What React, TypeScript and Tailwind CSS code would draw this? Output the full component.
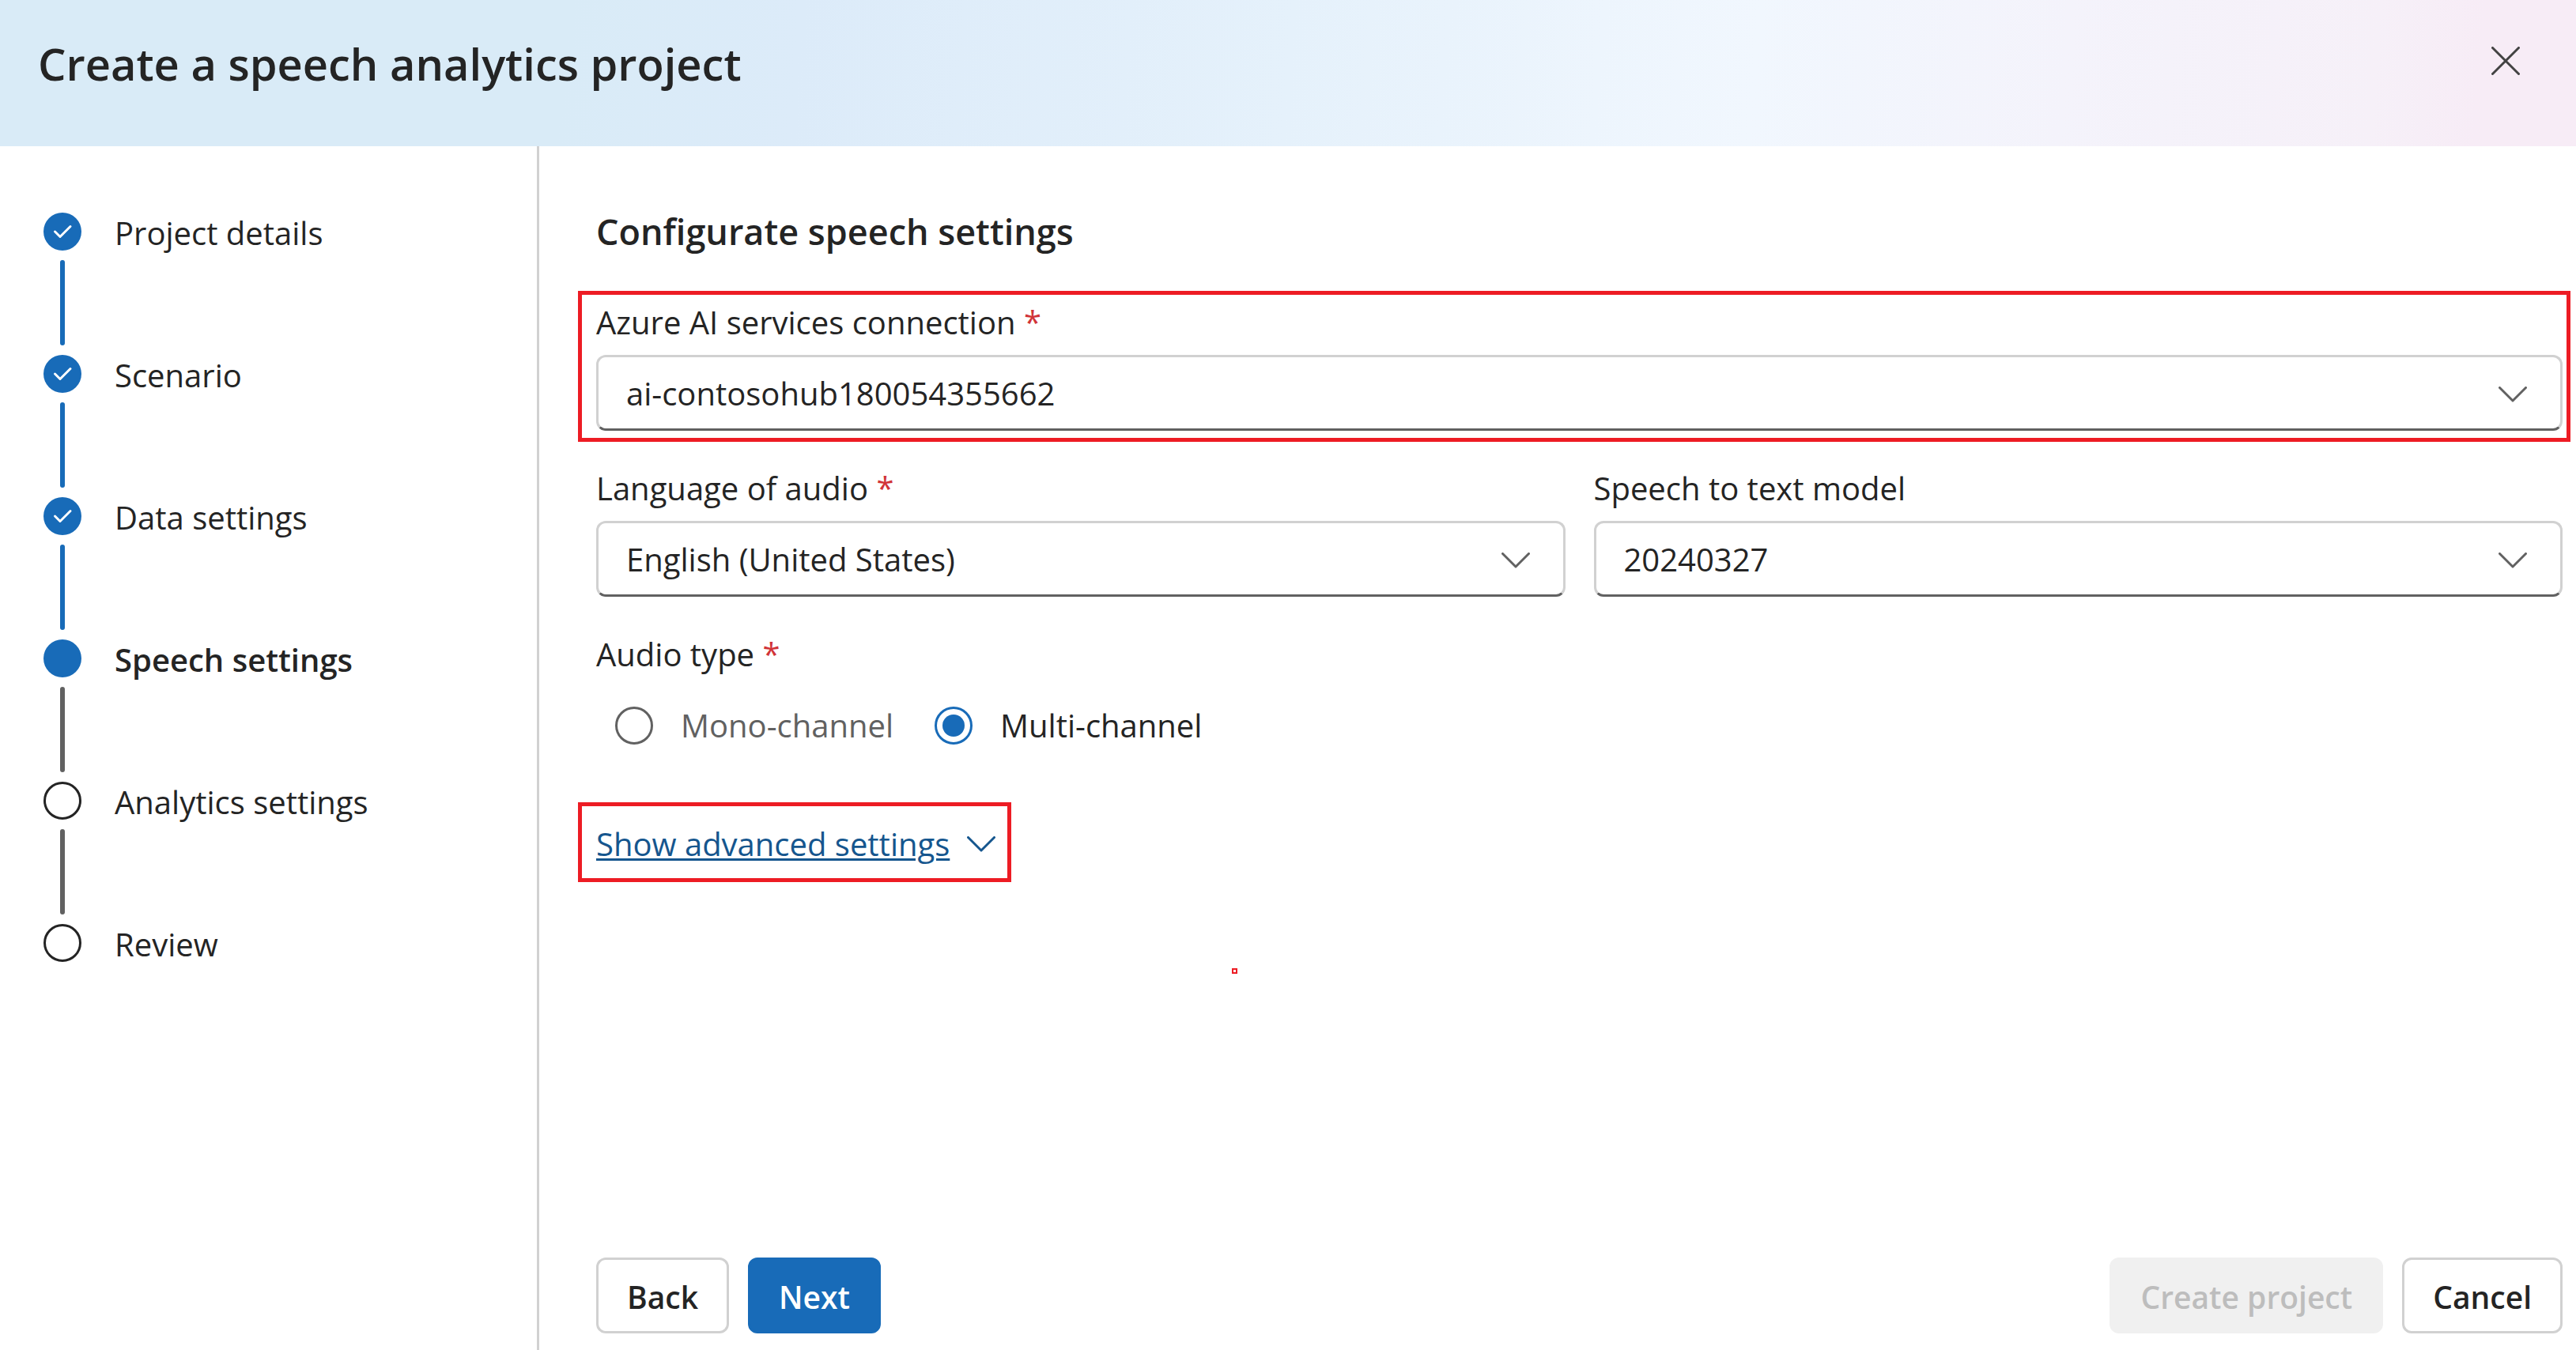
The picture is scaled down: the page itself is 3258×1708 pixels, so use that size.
import React from "react";

type StepState = "done" | "current" | "todo";

const steps: { label: string; state: StepState }[] = [
  { label: "Project details", state: "done" },
  { label: "Scenario", state: "done" },
  { label: "Data settings", state: "done" },
  { label: "Speech settings", state: "current" },
  { label: "Analytics settings", state: "todo" },
  { label: "Review", state: "todo" },
];

function Chevron({ className }: { className: string }) {
  return (
    <svg viewBox="0 0 36 20" className={`h-5 w-9 shrink-0 ${className}`} fill="none" aria-hidden="true">
      <path d="M1.5 1.5 18 18 34.5 1.5" stroke="currentColor" strokeWidth="3" strokeLinecap="round" strokeLinejoin="round" />
    </svg>
  );
}

function Required() {
  return <span className="text-[#d13438]"> *</span>;
}

function SelectField({ id, label, value, required = false }: { id: string; label: string; value: string; required?: boolean }) {
  return (
    <div className="flex min-w-0 flex-col gap-[11px]">
      <label htmlFor={id} className="leading-[60px]">
        {label}
        {required && <Required />}
      </label>
      <div className="relative">
        <select
          id={id}
          required={required}
          defaultValue={value}
          className="block h-24 w-full appearance-none rounded-xl border-[3px] border-[#d1d1d1] border-b-[#616161] bg-white pt-[2px] pr-28 pl-[35px]"
        >
          <option>{value}</option>
        </select>
        <Chevron className="pointer-events-none absolute top-10 right-[45px] text-[#616161]" />
      </div>
    </div>
  );
}

function Marker({ state }: { state: StepState }) {
  if (state === "todo") {
    return <span className="size-12 rounded-full border-[3px] border-[#242424]" />;
  }
  return (
    <span className="size-12 rounded-full bg-[#186bb8]">
      {state === "done" && (
        <svg viewBox="0 0 48 48" className="size-12" fill="none" aria-hidden="true">
          <path d="M14.5 24 21 30.5 34 17.5" stroke="white" strokeWidth="3" strokeLinecap="round" strokeLinejoin="round" />
        </svg>
      )}
    </span>
  );
}

function Steps() {
  return (
    <nav aria-label="Steps" className="w-[682px] shrink-0 border-r-[3px] border-[#d1d1d1] pt-[84px] pl-[55px]">
      <ol>
        {steps.map(({ label, state }, i) => (
          <li key={label} className="flex gap-[42px]" aria-current={state === "current" ? "step" : undefined}>
            <div className="flex flex-col items-center">
              <Marker state={state} />
              {i < steps.length - 1 && (
                <span className={`my-3 h-[108px] w-[6px] rounded-full ${state === "done" ? "bg-[#186bb8]" : "bg-[#616161]"}`} />
              )}
            </div>
            <span className={`leading-[52px] ${state === "current" ? "font-semibold" : ""}`}>{label}</span>
          </li>
        ))}
      </ol>
    </nav>
  );
}

function Radio({ id, label, checked = false }: { id: string; label: string; checked?: boolean }) {
  return (
    <div className="flex items-center gap-[35px]">
      <input
        type="radio"
        id={id}
        name="audio-type"
        defaultChecked={checked}
        className="peer size-12 shrink-0 appearance-none rounded-full border-[3px] border-[#616161] bg-clip-content p-[7px] checked:border-[#186bb8] checked:bg-[#186bb8]"
      />
      <label htmlFor={id} className="leading-[60px] text-[#616161] peer-checked:text-[#242424]">
        {label}
      </label>
    </div>
  );
}

const buttonBase = "h-24 rounded-xl border-[3px] px-9 pt-1 text-[39px] font-semibold";

export default function App() {
  return (
    <div className="flex min-h-screen flex-col bg-white font-['Open_Sans','Noto_Sans',sans-serif] text-[40px] text-[#242424]">
      <header className="flex items-start justify-between bg-[linear-gradient(95deg,#d9ebf7_0%,#d9ebf7_22%,#dcebf9_31%,#e5f1fb_50%,#f1f7fe_68%,#f4f3fb_80%,#f6f0f8_92%,#f7ecf6_96%)] pt-10 pr-[59px] pb-[65px] pl-12">
        <h1 className="text-[56px] leading-[80px] font-semibold">Create a speech analytics project</h1>
        <button type="button" aria-label="Close" className="flex h-[74px] w-[60px] items-center justify-center">
          <svg viewBox="0 0 36 36" className="size-9 text-[#424242]" fill="none" aria-hidden="true">
            <path d="M1.5 1.5 34.5 34.5M34.5 1.5 1.5 34.5" stroke="currentColor" strokeWidth="3" strokeLinecap="round" />
          </svg>
        </button>
      </header>

      <div className="flex flex-1">
        <Steps />

        <main className="relative flex min-w-0 flex-1 flex-col pt-[78px] pr-[17px] pb-[21px] pl-[72px]">
          <h2 className="text-[45px] leading-[60px] font-semibold">Configurate speech settings</h2>

          <div className="mt-[45px] -mr-[10px] -ml-[23px] border-[5px] border-[#ed1c24] pt-[5px] pr-[5px] pb-[9px] pl-[18px]">
            <SelectField id="connection" label="Azure AI services connection" value="ai-contosohub180054355662" required />
          </div>

          <div className="mt-[29px] grid grid-cols-2 gap-9">
            <SelectField id="language" label="Language of audio" value="English (United States)" required />
            <SelectField id="model" label="Speech to text model" value="20240327" />
          </div>

          <fieldset className="mt-[43px]">
            <legend className="leading-[60px]">
              Audio type
              <Required />
            </legend>
            <div className="mt-[30px] ml-6 flex gap-[52px]">
              <Radio id="mono" label="Mono-channel" />
              <Radio id="multi" label="Multi-channel" checked />
            </div>
          </fieldset>

          <div className="mt-[67px] -ml-[23px] self-start border-[5px] border-[#ed1c24] pt-[18px] pr-[15px] pb-[13px] pl-[18px]">
            <a href="#advanced" className="flex items-center gap-[22px] leading-[60px] text-[#15568e]">
              <span className="underline decoration-[3px] underline-offset-[3px]">Show advanced settings</span>
              <Chevron className="" />
            </a>
          </div>

          <span className="absolute top-[1040px] left-[34%] size-[7px] border-2 border-[#ed1c24]" />

          <footer className="mt-auto flex justify-between pt-12">
            <div className="flex gap-6">
              <button type="button" className={`${buttonBase} border-[#d1d1d1] bg-white`}>Back</button>
              <button type="button" className={`${buttonBase} border-[#186bb8] bg-[#186bb8] text-white`}>Next</button>
            </div>
            <div className="flex gap-6">
              <button type="button" disabled className={`${buttonBase} border-[#f0f0f0] bg-[#f0f0f0] text-[#bdbdbd]`}>Create project</button>
              <button type="button" className={`${buttonBase} border-[#d1d1d1] bg-white`}>Cancel</button>
            </div>
          </footer>
        </main>
      </div>
    </div>
  );
}
